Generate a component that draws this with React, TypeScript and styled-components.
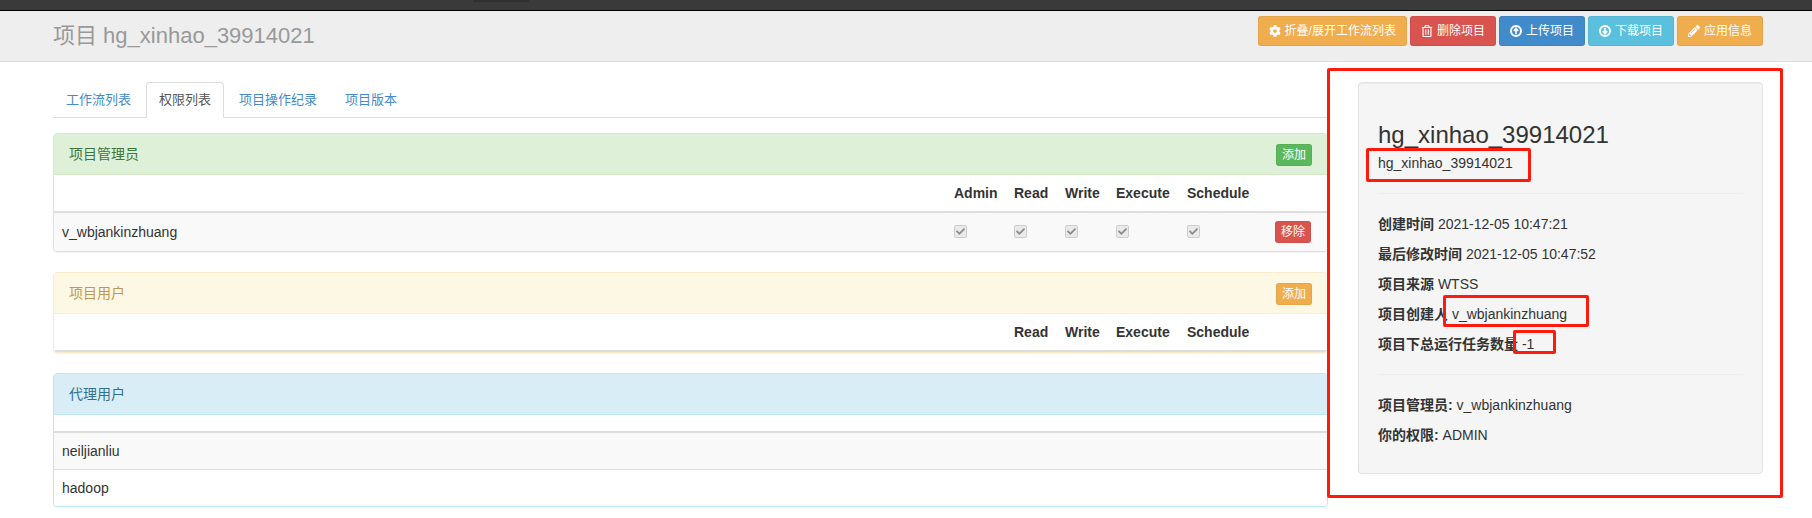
import React from "react";
import styled, { createGlobalStyle } from "styled-components";
import { FaCheck, FaCog, FaPencilAlt, FaRegTrashAlt } from "react-icons/fa";

const GlobalStyle = createGlobalStyle`
  html, body {
    margin: 0;
    background: #fff;
    color: #333;
    font-family: "Liberation Sans", "Noto Sans CJK SC", sans-serif;
    font-size: 14px;
    line-height: 20px;
  }
  * { box-sizing: border-box; }
`;

const btnColors = {
  warning: "#f0ad4e",
  danger: "#d9534f",
  primary: "#428bca",
  info: "#5bc0de",
  success: "#5cb85c",
};
type BtnKind = keyof typeof btnColors;

const panelTones = {
  success: { bg: "#dff0d8", border: "#d6e9c6", text: "#3c763d" },
  warning: { bg: "#fcf8e3", border: "#faebcc", text: "#c09853" },
  info: { bg: "#d9edf7", border: "#bce8f1", text: "#31708f" },
};
type Tone = keyof typeof panelTones;

const Page = styled.div`
  position: relative;
  width: 1812px;
  height: 518px;
  overflow: hidden;
`;

const TopBar = styled.div`
  height: 11px;
  background: #3a3a3a;
  border-bottom: 1px solid #000;
`;

const TopBarTab = styled.div`
  width: 56px;
  height: 2px;
  margin-left: 473px;
  background: #303030;
`;

const Header = styled.header`
  height: 51px;
  background: #eee;
  border-bottom: 1px solid #ddd;
  padding: 0 49px 0 53px;
  display: flex;
  justify-content: space-between;
  align-items: center;
`;

const PageTitle = styled.h1`
  margin: 0;
  font-size: 22px;
  font-weight: 400;
  line-height: 24px;
  color: #999;
`;

const Toolbar = styled.div`
  display: flex;
  gap: 3px;
  align-self: flex-start;
  margin-top: 5px;
`;

const Btn = styled.button<{ $kind: BtnKind }>`
  height: 30px;
  padding: 0 10px;
  display: flex;
  align-items: center;
  gap: 4px;
  border: 1px solid rgba(0, 0, 0, 0.05);
  border-radius: 3px;
  background: ${(p) => btnColors[p.$kind]};
  color: #fff;
  font: inherit;
  font-size: 12px;
  svg {
    width: 12px;
    height: 12px;
  }
`;

const Content = styled.main`
  display: flex;
  gap: 30px;
  padding: 20px 0 0 53px;
`;

const LeftColumn = styled.div`
  width: 1275px;
  display: flex;
  flex-direction: column;
`;

const Tabs = styled.nav`
  display: flex;
  gap: 2px;
  height: 36px;
  border-bottom: 1px solid #ddd;
  margin-bottom: 15px;
`;

const Tab = styled.a<{ $active?: boolean }>`
  height: 36px;
  padding: 8px 12px;
  font-size: 13px;
  line-height: 18px;
  border: 1px solid ${(p) => (p.$active ? "#ddd" : "transparent")};
  border-bottom-color: ${(p) => (p.$active ? "#fff" : "transparent")};
  border-radius: 4px 4px 0 0;
  background: ${(p) => (p.$active ? "#fff" : "transparent")};
  color: ${(p) => (p.$active ? "#555" : "#428bca")};
`;

const Panel = styled.section<{ $tone: Tone }>`
  border: 1px solid ${(p) => panelTones[p.$tone].border};
  border-radius: 4px;
  box-shadow: 0 1px 1px rgba(0, 0, 0, 0.05);
  margin-bottom: 20px;
  overflow: hidden;
`;

const PanelHead = styled.div<{ $tone: Tone }>`
  height: 41px;
  padding: 10px 15px 0;
  display: flex;
  justify-content: space-between;
  align-items: flex-start;
  background: ${(p) => panelTones[p.$tone].bg};
  border-bottom: 1px solid ${(p) => panelTones[p.$tone].border};
  color: ${(p) => panelTones[p.$tone].text};
`;

const SmallBtn = styled.button<{ $kind: BtnKind }>`
  width: 36px;
  height: 22px;
  padding: 0;
  border: 1px solid rgba(0, 0, 0, 0.05);
  border-radius: 3px;
  background: ${(p) => btnColors[p.$kind]};
  color: #fff;
  font: inherit;
  font-size: 12px;
  line-height: 18px;
`;

const HeadRow = styled.div`
  display: grid;
  grid-template-columns: 1fr 60px 51px 51px 71px 88px 60px;
  align-items: center;
  height: 38px;
  font-weight: 700;
  background: #fff;
  border-bottom: 2px solid #ddd;
`;

const Row = styled.div<{ $striped?: boolean; $last?: boolean }>`
  display: grid;
  grid-template-columns: 1fr 60px 51px 51px 71px 88px 60px;
  align-items: center;
  min-height: ${(p) => (p.$last ? "36px" : "37px")};
  background: ${(p) => (p.$striped ? "#f9f9f9" : "#fff")};
  border-bottom: ${(p) => (p.$last ? "none" : "1px solid #ddd")};
`;

const EmptyHead = styled.div`
  height: 18px;
  background: #fff;
  border-bottom: 2px solid #ddd;
`;

const Cell = styled.div`
  padding: 0 8px;
  display: flex;
  align-items: center;
  white-space: nowrap;
`;

const ActionCell = styled(Cell)`
  padding: 8px;
`;

const CheckBox = styled.span`
  width: 13px;
  height: 13px;
  margin-bottom: 2px;
  display: flex;
  align-items: center;
  justify-content: center;
  background: #eaeaea;
  border: 1px solid #cdcdcd;
  border-radius: 2px;
  color: #8c8c8c;
  svg {
    width: 9px;
    height: 9px;
  }
`;

const Well = styled.aside`
  width: 405px;
  height: 392px;
  padding: 39px 19px 0;
  background: #f5f5f5;
  border: 1px solid #e3e3e3;
  border-radius: 4px;
  box-shadow: inset 0 1px 1px rgba(0, 0, 0, 0.05);
`;

const WellTitle = styled.h2`
  margin: 0 0 5px;
  font-size: 24px;
  font-weight: 400;
  line-height: 26px;
`;

const WellSub = styled.div`
  height: 20px;
`;

const Divider = styled.hr`
  border: 0;
  border-top: 1px solid #eee;
  margin: 20px 0;
`;

const Info = styled.p`
  margin: 0 0 10px;
  b {
    font-weight: 700;
  }
`;

const Mark = styled.div<{ $x: number; $y: number; $w: number; $h: number }>`
  position: absolute;
  left: ${(p) => p.$x}px;
  top: ${(p) => p.$y}px;
  width: ${(p) => p.$w}px;
  height: ${(p) => p.$h}px;
  border: 3px solid #ff1a0e;
  border-radius: 2px;
  pointer-events: none;
`;

// glyphicon-style ring with an arrow inside
const CircleArrow = ({ down }: { down?: boolean }) => (
  <svg viewBox="0 0 12 12" fill="none">
    <circle cx="6" cy="6" r="5" stroke="#fff" strokeWidth="2" />
    <path
      d={down ? "M6 2.8V8M3.8 6 6 8.8 8.2 6" : "M6 9.2V4M3.8 6 6 3.2 8.2 6"}
      stroke="#fff"
      strokeWidth="1.6"
    />
  </svg>
);

const toolbar: { kind: BtnKind; icon: React.ReactNode; label: string }[] = [
  { kind: "warning", icon: <FaCog />, label: "折叠/展开工作流列表" },
  { kind: "danger", icon: <FaRegTrashAlt />, label: "删除项目" },
  { kind: "primary", icon: <CircleArrow />, label: "上传项目" },
  { kind: "info", icon: <CircleArrow down />, label: "下载项目" },
  { kind: "warning", icon: <FaPencilAlt />, label: "应用信息" },
];

const tabs = ["工作流列表", "权限列表", "项目操作纪录", "项目版本"];

const Checked = () => (
  <Cell>
    <CheckBox>
      <FaCheck />
    </CheckBox>
  </Cell>
);

export default function App() {
  return (
    <Page>
      <GlobalStyle />
      <TopBar>
        <TopBarTab />
      </TopBar>
      <Header>
        <PageTitle>项目 hg_xinhao_39914021</PageTitle>
        <Toolbar>
          {toolbar.map((b) => (
            <Btn key={b.label} $kind={b.kind}>
              {b.icon}
              {b.label}
            </Btn>
          ))}
        </Toolbar>
      </Header>

      <Content>
        <LeftColumn>
          <Tabs>
            {tabs.map((t) => (
              <Tab key={t} $active={t === "权限列表"}>
                {t}
              </Tab>
            ))}
          </Tabs>

          <Panel $tone="success">
            <PanelHead $tone="success">
              项目管理员
              <SmallBtn $kind="success">添加</SmallBtn>
            </PanelHead>
            <HeadRow>
              <Cell />
              <Cell>Admin</Cell>
              <Cell>Read</Cell>
              <Cell>Write</Cell>
              <Cell>Execute</Cell>
              <Cell>Schedule</Cell>
              <Cell />
            </HeadRow>
            <Row $striped $last>
              <Cell>v_wbjankinzhuang</Cell>
              <Checked />
              <Checked />
              <Checked />
              <Checked />
              <Checked />
              <ActionCell>
                <SmallBtn $kind="danger">移除</SmallBtn>
              </ActionCell>
            </Row>
          </Panel>

          <Panel $tone="warning">
            <PanelHead $tone="warning">
              项目用户
              <SmallBtn $kind="warning">添加</SmallBtn>
            </PanelHead>
            <HeadRow>
              <Cell />
              <Cell />
              <Cell>Read</Cell>
              <Cell>Write</Cell>
              <Cell>Execute</Cell>
              <Cell>Schedule</Cell>
              <Cell />
            </HeadRow>
          </Panel>

          <Panel $tone="info">
            <PanelHead $tone="info">代理用户</PanelHead>
            <EmptyHead />
            <Row $striped>
              <Cell>neiljianliu</Cell>
            </Row>
            <Row $last>
              <Cell>hadoop</Cell>
            </Row>
          </Panel>
        </LeftColumn>

        <Well>
          <WellTitle>hg_xinhao_39914021</WellTitle>
          <WellSub>hg_xinhao_39914021</WellSub>
          <Divider />
          <Info>
            <b>创建时间</b> 2021-12-05 10:47:21
          </Info>
          <Info>
            <b>最后修改时间</b> 2021-12-05 10:47:52
          </Info>
          <Info>
            <b>项目来源</b> WTSS
          </Info>
          <Info>
            <b>项目创建人</b> v_wbjankinzhuang
          </Info>
          <Info>
            <b>项目下总运行任务数量</b> -1
          </Info>
          <Divider />
          <Info>
            <b>项目管理员:</b> v_wbjankinzhuang
          </Info>
          <Info>
            <b>你的权限:</b> ADMIN
          </Info>
        </Well>
      </Content>

      <Mark $x={1327} $y={68} $w={456} $h={430} />
      <Mark $x={1366} $y={148} $w={165} $h={34} />
      <Mark $x={1443} $y={295} $w={146} $h={32} />
      <Mark $x={1513} $y={330} $w={43} $h={24} />
    </Page>
  );
}
